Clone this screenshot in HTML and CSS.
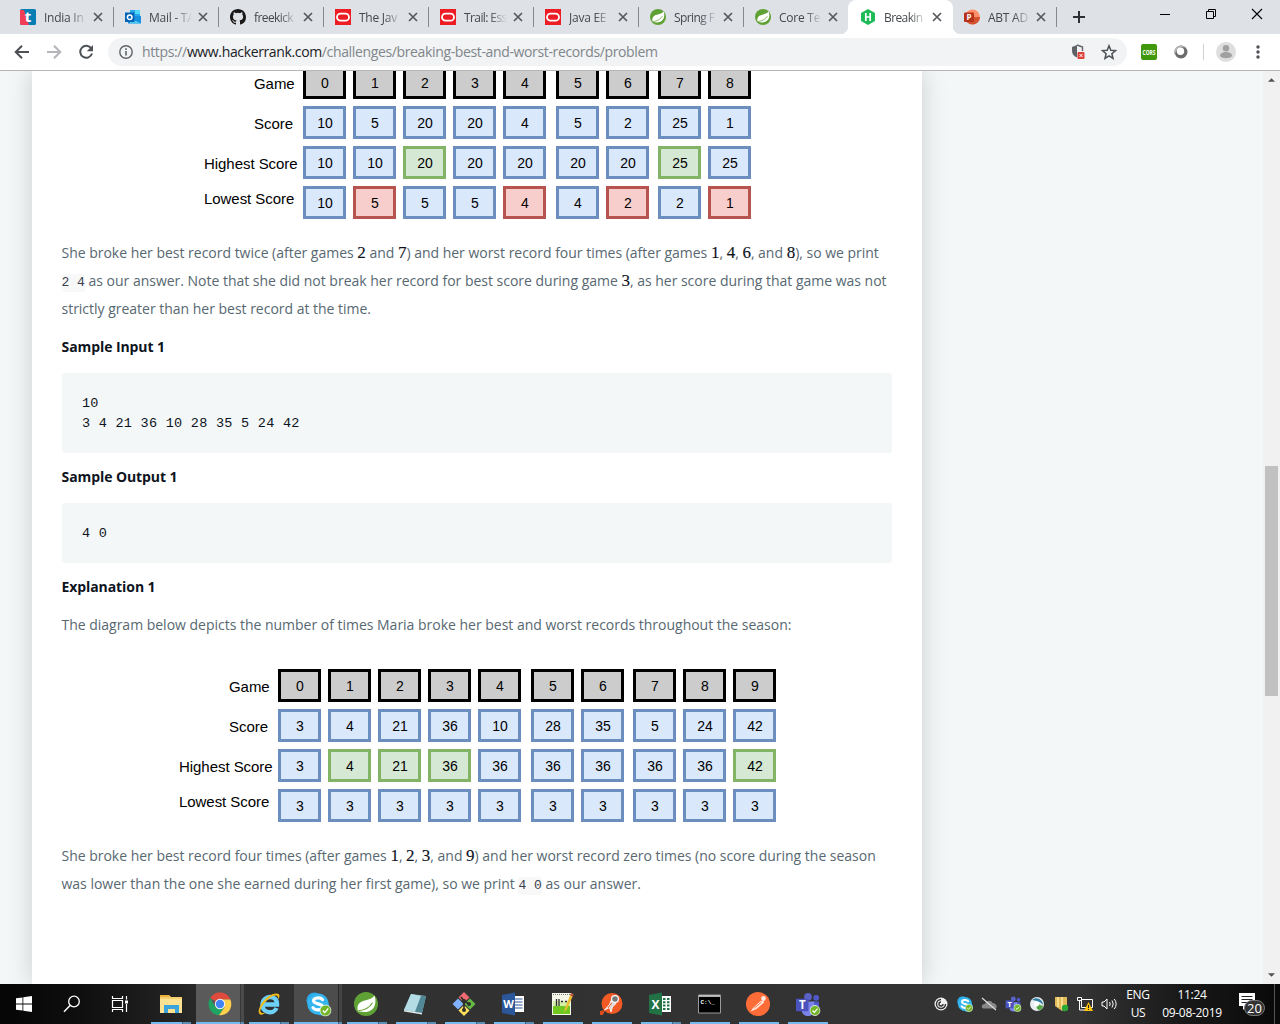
FILE: index.html
```html
<!DOCTYPE html>
<html lang="en">
<head>
<meta charset="utf-8">
<title>Breaking the Records | HackerRank</title>
<link rel="stylesheet" href="styles.css">
</head>
<body>
<svg class="defs" aria-hidden="true">
  <symbol id="close" viewBox="0 0 10 10"><path d="M1 1l8 8M9 1L1 9" stroke="#55595d" stroke-width="1.7"/></symbol>
  <symbol id="oracle" viewBox="0 0 16 16"><path fill="#ee1c25" d="M0 0h16v16H0z"/><rect x="2" y="4.7" width="12" height="7" rx="3.5" fill="none" stroke="#fff" stroke-width="1.8"/></symbol>
  <symbol id="spring" viewBox="0 0 24 24"><circle cx="12" cy="12" r="12" fill="#5fa134"/><path d="M20.500 3.500c1.800 5.500 1.200 11-2.700 14.200-3.500 3-8.500 2.800-13.600 1.600C3 17 3.200 13.500 5 11.500c3.800-4.200 12-2.500 15.500-8z" fill="#fff"/><path d="M4.500 18.800c6-.6 11-3 14-8" fill="none" stroke="#5fa134" stroke-width="1.100"/></symbol>
  <symbol id="ok" viewBox="0 0 12 12"><circle cx="6" cy="6" r="5.500" fill="#72b527" stroke="#fff" stroke-width=".8"/><path d="M3.300 6l2 2 3.500-4" fill="none" stroke="#fff" stroke-width="1.300"/></symbol>
  <symbol id="skype" viewBox="0 0 26 26"><circle cx="9" cy="9" r="8.500" fill="#2aa9e6"/><circle cx="17" cy="17" r="8.500" fill="#2aa9e6"/><circle cx="13" cy="13" r="11.500" fill="#35b5ef"/><path d="M18 8.300C15.500 5.400 8 5.900 8.200 9.700c.2 4 9.800 2.300 9.800 6.400 0 4.200-8 4.300-10.500.9" fill="none" stroke="#fff" stroke-width="3.400" stroke-linecap="round"/></symbol>
  <symbol id="teams" viewBox="0 0 26 26"><circle cx="13.500" cy="5" r="4" fill="#5b62c8"/><circle cx="22" cy="6" r="3" fill="#5059c9"/><path d="M17 10h8v8c0 3-4 5-8 3z" fill="#5059c9"/><path d="M7 10h13v9c0 8-13 8-13 0z" fill="#7b83eb"/><path d="M1 7h13v13H1z" fill="#4b53bc"/><text x="7.500" y="17.500" class="glyph" font-size="12">T</text></symbol>
</svg>

<header class="tabstrip">
  <div class="tab"><svg class="fav" viewBox="0 0 16 16"><rect width="16" height="16" rx="1.500" fill="#087eb4"/><path d="M0 1h4l5 15H1L0 15z" fill="#ef3e56"/><text x="8" y="13" class="glyph" font-size="15">t</text></svg><span class="title">India In</span><svg class="x"><use href="#close"/></svg></div>
  <div class="tab"><svg class="fav" viewBox="0 0 16 16"><path d="M5 1h10v7H5z" fill="#28a8ea"/><path d="M10 1h5v4h-5z" fill="#50d9ff"/><path d="M3 7h13v7.500H3z" fill="#1490df"/><path d="M5 9l11 5.500H5z" fill="#50c9f5"/><path d="M0 3.500h9.500v9.500H0z" fill="#0364b8"/><circle cx="4.700" cy="8.200" r="2.300" fill="none" stroke="#fff" stroke-width="1.500"/></svg><span class="title">Mail - T<span class="tight">A</span></span><svg class="x"><use href="#close"/></svg></div>
  <div class="tab"><svg class="fav" viewBox="0 0 16 16"><path fill="#191717" d="M8 0C3.580 0 0 3.580 0 8c0 3.540 2.290 6.530 5.470 7.590.4.070.55-.17.55-.38v-1.490c-2.230.48-2.690-.94-2.690-.94-.36-.91-.89-1.170-.89-1.170-.72-.51.070-.49.070-.49.8.070 1.220.83 1.220.83.72 1.230 1.870.87 2.330.66.070-.52.28-.87.51-1.070-1.780-.2-3.640-.89-3.640-3.950 0-.87.31-1.590.82-2.150-.080-.2-.36-1.020.080-2.120 0 0 .67-.21 2.200.82a7.600 7.600 0 0 1 4 0c1.530-1.030 2.200-.82 2.200-.82.44 1.100.16 1.920.080 2.120.51.560.82 1.270.82 2.150 0 3.070-1.870 3.750-3.650 3.950.29.25.54.73.54 1.480v2.190c0 .21.15.46.55.38A8 8 0 0 0 16 8c0-4.420-3.580-8-8-8z"/></svg><span class="title snug">freekick</span><svg class="x"><use href="#close"/></svg></div>
  <div class="tab"><svg class="fav"><use href="#oracle"/></svg><span class="title">The Jav</span><svg class="x"><use href="#close"/></svg></div>
  <div class="tab"><svg class="fav"><use href="#oracle"/></svg><span class="title snug">Trail: Ess</span><svg class="x"><use href="#close"/></svg></div>
  <div class="tab"><svg class="fav"><use href="#oracle"/></svg><span class="title">Java EE</span><svg class="x"><use href="#close"/></svg></div>
  <div class="tab"><svg class="fav"><use href="#spring"/></svg><span class="title snug">Spring F</span><svg class="x"><use href="#close"/></svg></div>
  <div class="tab before-active"><svg class="fav"><use href="#spring"/></svg><span class="title">Core Te</span><svg class="x"><use href="#close"/></svg></div>
  <div class="tab active"><svg class="fav" viewBox="0 0 16 16"><path d="M8 0l7 4v8l-7 4-7-4V4z" fill="#1fba58"/><path d="M5.800 4v8M10.200 4v8M5.800 8h4.400" stroke="#fff" stroke-width="1.700"/></svg><span class="title snug">Breakin</span><svg class="x"><use href="#close"/></svg></div>
  <div class="tab last"><svg class="fav" viewBox="0 0 16 16"><circle cx="8.500" cy="8" r="7.500" fill="#ff8f6b"/><path d="M1 8h15a7.500 7.500 0 0 1-15 0z" fill="#d35230"/><rect y="3.500" width="10" height="9.500" rx="1" fill="#b7321a"/><text x="5" y="11.300" class="glyph" font-size="8">P</text></svg><span class="title">ABT AD</span><svg class="x"><use href="#close"/></svg></div>
  <svg class="newtab" viewBox="0 0 12 12"><path d="M6 0v12M0 6h12" stroke="#2d3033" stroke-width="2"/></svg>
  <div class="winbtns">
    <svg viewBox="0 0 12 12"><path d="M1 6.500h10" stroke="#000"/></svg>
    <svg viewBox="0 0 12 12"><path d="M1.500 3.500h7v7h-7zM3.500 3V1.500h7v7H9" fill="none" stroke="#000"/></svg>
    <svg viewBox="0 0 12 12"><path d="M1 1l10 10M11 1L1 11" stroke="#000" stroke-width="1.100"/></svg>
  </div>
</header>

<nav class="toolbar">
  <svg class="nav" viewBox="0 0 16 16"><path d="M15 8H2M8 1.700L1.700 8 8 14.300" fill="none" stroke="#4d5156" stroke-width="2"/></svg>
  <svg class="nav" viewBox="0 0 16 16"><path d="M1 8h13M8 1.700L14.300 8 8 14.300" fill="none" stroke="#b4b6b9" stroke-width="2"/></svg>
  <svg class="nav" viewBox="0 0 16 16"><path d="M13.300 4.500A6 6 0 1 0 14 9.500" fill="none" stroke="#4d5156" stroke-width="2"/><path d="M15 1v6.200H8.800z" fill="#4d5156"/></svg>
  <div class="omnibox">
    <svg class="info" viewBox="0 0 14 14"><circle cx="7" cy="7" r="6.200" fill="none" stroke="#5f6368" stroke-width="1.400"/><path d="M7 6v4.500M7 3.300v1.600" stroke="#5f6368" stroke-width="1.600"/></svg>
    <span class="url">https://<b>www.hackerrank.com</b>/challenges/breaking-best-and-worst-records/problem</span>
    <svg class="shield" viewBox="0 0 14 16"><path d="M6 1L1 3v4c0 3 2 5.500 5 6.500z" fill="#5f6368"/><path d="M6 1l5.500 2v4" fill="none" stroke="#5f6368" stroke-width="1.400"/><rect x="6.500" y="8" width="7" height="7" rx="1" fill="#dd4338"/><path d="M8.500 10l3 3m0-3l-3 3" stroke="#fff"/></svg>
    <svg class="star" viewBox="0 0 16 16"><path d="M8 1.800l1.800 4.400 4.700.4-3.600 3.100 1.100 4.600L8 11.800l-4 2.500 1.100-4.600-3.600-3.100 4.700-.4z" fill="none" stroke="#4d5156" stroke-width="1.500"/></svg>
  </div>
  <svg class="ext" viewBox="0 0 16 16"><rect width="16" height="16" rx="2" fill="#42980b"/><text x="8" y="10.500" class="glyph" font-size="7" textLength="13" lengthAdjust="spacingAndGlyphs">CORS</text></svg>
  <svg class="ext orb" viewBox="0 0 16 16"><circle cx="8" cy="8" r="6.500" fill="#6c6c6c"/><path d="M8 1.500A6.500 6.500 0 0 0 2 11 8 8 0 0 1 13.500 4 6.500 6.500 0 0 0 8 1.500z" fill="#b5b5b5"/><circle cx="7.500" cy="7.200" r="3.700" fill="#fff"/></svg>
  <i class="rule"></i>
  <svg class="avatar" viewBox="0 0 20 20"><circle cx="10" cy="10" r="10" fill="#dedede"/><circle cx="10" cy="6.300" r="3.200" fill="#a0a0a0"/><path d="M4 14c0-5.300 12-5.300 12 0-2 3-10 3-12 0z" fill="#a0a0a0"/></svg>
  <svg class="menu" viewBox="0 0 4 14"><g fill="#4d5156"><circle cx="2" cy="2" r="1.700"/><circle cx="2" cy="7" r="1.700"/><circle cx="2" cy="12" r="1.700"/></g></svg>
</nav>

<div class="viewport">
  <div class="canvas">
    <main class="card">
      <div class="diagram first" data-games="0 1 2 3 4 5 6 7 8" data-score="10 5 20 20 4 5 2 25 1" data-high="10 10 20* 20 20 20 20 25* 25" data-low="10 5* 5 5 4* 4 2* 2 1*"></div>
      <p>She broke her best record twice (after games <span class="m">2</span> and <span class="m">7</span>) and her worst record four times (after games <span class="m">1</span>, <span class="m">4</span>, <span class="m">6</span>, and <span class="m">8</span>), so we print<br><code>2 4</code> as our answer. Note that she did not break her record for best score during game <span class="m">3</span>, as her score during that game was not<br>strictly greater than her best record at the time.</p>
      <h3>Sample Input 1</h3>
      <pre>10
3 4 21 36 10 28 35 5 24 42</pre>
      <h3>Sample Output 1</h3>
      <pre>4 0</pre>
      <h3>Explanation 1</h3>
      <p class="intro">The diagram below depicts the number of times Maria broke her best and worst records throughout the season:</p>
      <div class="diagram second" data-games="0 1 2 3 4 5 6 7 8 9" data-score="3 4 21 36 10 28 35 5 24 42" data-high="3 4* 21* 36* 36 36 36 36 36 42*" data-low="3 3 3 3 3 3 3 3 3 3"></div>
      <p>She broke her best record four times (after games <span class="m">1</span>, <span class="m">2</span>, <span class="m">3</span>, and <span class="m">9</span>) and her worst record zero times (no score during the season<br>was lower than the one she earned during her first game), so we print <code>4 0</code> as our answer.</p>
    </main>
  </div>
  <aside class="scrollbar">
    <svg viewBox="0 0 8 4"><path d="M0 4l4-4 4 4z"/></svg>
    <div class="track"><div class="thumb"></div></div>
    <svg viewBox="0 0 8 4"><path d="M0 0l4 4 4-4z"/></svg>
  </aside>
</div>

<footer class="taskbar">
  <div class="sys"><svg width="16" height="16" viewBox="0 0 16 16"><path d="M0 2.300L6.500 1.400v6.200H0zM7.300 1.300L16 0v7.600H7.300zM0 8.400h6.500v6.200L0 13.700zM7.300 8.400H16V16l-8.700-1.300z" fill="#fff"/></svg></div>
  <div class="sys"><svg width="18" height="18" viewBox="0 0 18 18"><circle cx="11" cy="6.500" r="5.300" fill="none" stroke="#fff" stroke-width="1.300"/><path d="M7.300 10.300L1 16.800" stroke="#fff" stroke-width="1.500"/></svg></div>
  <div class="sys"><svg width="16" height="16" viewBox="0 0 16 16"><path d="M.5 0v2.500h10V0M.5 16v-2.500h10V16M.5 4.500h10v7H.5zM14.500 0v3.500M14.500 8v8" fill="none" stroke="#fff" stroke-width="1.200"/><path d="M13 4.500h3v3h-3z" fill="#fff"/></svg></div>
  <div class="apps">
    <div class="app multi"><svg viewBox="0 0 24 24"><path d="M1 4V3h9l2 2h11v16H1z" fill="#f5cf6b"/><path d="M1 7h22v14H1z" fill="#fde293"/><path d="M5 21v-8h15v8h-4v-4H9v4z" fill="#3ba4dc"/><path d="M1 3h9v2H1z" fill="#eab03d"/></svg></div>
    <div class="app on multi"><svg viewBox="0 0 24 24"><path d="M12 12L2.200 6.100A11.300 11.300 0 0 1 22.400 7.500H12z" fill="#de4b3c"/><path d="M12 12l-5 2.500L2.200 6.100A11.300 11.300 0 0 0 11 23.300l5.500-8z" fill="#1fa462"/><path d="M12 7.500h10.400A11.300 11.300 0 0 1 11 23.300l5.500-8z" fill="#fdd14c"/><circle cx="12" cy="12" r="5.200" fill="#f4f4f4"/><circle cx="12" cy="12" r="4.200" fill="#4284f3"/></svg></div>
    <div class="app multi"><svg viewBox="0 0 24 24"><path d="M7.500 12.500H20c.4-10.500-14.500-9.800-14.500.5 0 8.500 11.500 9.500 14 3" fill="none" stroke="#6cd0f7" stroke-width="4.400"/><path d="M2.500 22C-1 17 9 2 19 1.500c4.500-.3 4 3.500 2 6C22 2 17 2 11 7.500 5 13 1 20 5 21c2 .5 4-1 5-1.500-3 2.800-6 4-7.500 2.500z" fill="#f1bc1b"/></svg></div>
    <div class="app on multi skype"><svg viewBox="0 0 24 24"><use href="#skype" width="24" height="24"/><use href="#ok" x="13.500" y="12.500" width="12" height="12"/></svg></div>
    <div class="app multi"><svg viewBox="0 0 24 24"><use href="#spring"/></svg></div>
    <div class="app multi"><svg viewBox="0 0 24 24"><path d="M8 2l15 2-4 17-18-3z" fill="#8abfcf"/><path d="M8 2l10 2-6 16-11-2z" fill="#b4dce5"/><path d="M18 4l5 0-4 17-7-1z" fill="#528795"/><path d="M1 18l18 3v1.500L1 19.500z" fill="#e1e8e8"/></svg></div>
    <div class="app multi"><svg viewBox="0 0 24 24"><path d="M12 0l5.500 5.500-5.500 5-5.500-5z" fill="#ee6b72"/><path d="M6 6.500l5.500 5.500L6 17.500.5 12z" fill="#80b3ff"/><path d="M18 6.500l5.500 5.500-5.500 5.500-5.500-5.500z" fill="#66bb45"/><path d="M12 13l5.500 5.500L12 24l-5.500-5.500z" fill="#ffe15d"/><path d="M9 5l3 4v9M12 9l5 3" fill="none" stroke="#302d2d" stroke-width="1.700"/><g fill="#302d2d"><circle cx="12" cy="9" r="2"/><circle cx="17" cy="12" r="2"/><circle cx="12" cy="18" r="2"/></g></svg></div>
    <div class="app multi"><svg viewBox="0 0 24 24"><path d="M12 4h11v16H12z" fill="#fff"/><path d="M14 7h7.500M14 10h7.500M14 13h7.500M14 16h7.500" stroke="#2b579a" stroke-width="1.200"/><path d="M1 3l13-2.500v23L1 21z" fill="#2b579a"/><text x="7.500" y="16" class="glyph" font-size="11">W</text></svg></div>
    <div class="app"><svg viewBox="0 0 24 24"><path d="M2 1h19v22H2z" fill="#f5f7e8"/><path d="M3 14h17v8H3z" fill="#70c820"/><path d="M3 9h17v5H3z" fill="#d6efa6"/><path d="M3 2.500h17" stroke="#777" stroke-dasharray="1 1"/><path d="M6.500 7v7M9 7v7M11 9.500h2M15 9.500h2" stroke="#333" stroke-width="1.300"/><path d="M21 1l2.500 1.500L17 17l-3 3 1-4z" fill="#edbd32"/><path d="M21 1l2.500 1.500-1 2.500L20 3z" fill="#ba504b"/></svg></div>
    <div class="app"><svg viewBox="0 0 24 24"><circle cx="13" cy="11.500" r="10.500" fill="#f15a24"/><path d="M1 19l5-1-2 5-3 0z" fill="#d94b1c"/><path d="M12 8.500l5 3-3.500 3.500-1.500 5-1.500-4.500L5.500 18l5-5.500z" fill="#ddd" stroke="#fff" stroke-width=".8"/><path d="M13 10.500L9 16" stroke="#f15a24"/><circle cx="16" cy="7" r="3.400" fill="#777" stroke="#fff" stroke-width="1.200"/></svg></div>
    <div class="app multi"><svg viewBox="0 0 24 24"><path d="M12 4h11v16H12z" fill="#fff"/><path d="M15 7h2.500M19 7h2.500M15 10.300h2.500M19 10.300h2.500M15 13.600h2.500M19 13.600h2.500M15 17h2.500M19 17h2.500" stroke="#217346" stroke-width="2"/><path d="M1 3l13-2.500v23L1 21z" fill="#217346"/><text x="7.500" y="16.500" class="glyph" font-size="12">X</text></svg></div>
    <div class="app"><svg viewBox="0 0 24 24"><path d="M1.500 3h22v18h-22z" fill="#000" stroke="#9a9a9a"/><path d="M2 4h21" stroke="#ddd" stroke-width="1.600"/><text x="3.500" y="11.500" class="prompt">C:\_</text></svg></div>
    <div class="app"><svg viewBox="0 0 24 24"><circle cx="12" cy="12" r="12" fill="#ff6c37"/><path d="M4.500 19.500l3-4L14.500 9l3-.5.5 2-7.500 6.500z" fill="#ffe9e0"/><circle cx="17.500" cy="6.500" r="2.400" fill="#ffe9e0"/><path d="M8.500 16l7-6" stroke="#ff6c37"/></svg></div>
    <div class="app"><svg viewBox="0 0 24 24"><use href="#teams" width="25" height="25"/><use href="#ok" x="14.500" y="13" width="11" height="11"/></svg></div>
  </div>
  <div class="tray">
    <svg viewBox="0 0 16 16"><circle cx="8" cy="8" r="6.500" fill="#eee"/><path d="M8 3.500a4.500 4.500 0 1 0 4.500 4.500M8 6a2 2 0 1 0 2 2" fill="none" stroke="#333" stroke-width="1.400"/></svg>
    <svg viewBox="0 0 16 16"><use href="#skype" width="16" height="16"/><use href="#ok" x="8" y="8" width="8" height="8"/></svg>
    <svg viewBox="0 0 16 16"><path d="M2 12.500c-3-2 0-5 2-4.500 1-4 6.500-4 7.500-1 3-.5 6 4 3 5.500z" fill="#888"/><path d="M1 2l14 12" stroke="#ddd" stroke-width="1.200"/></svg>
    <svg viewBox="0 0 16 16"><use href="#teams" width="16" height="16"/><use href="#ok" x="8.500" y="8" width="8" height="8"/></svg>
    <svg viewBox="0 0 16 16"><circle cx="8" cy="8" r="7" fill="#e9eef0"/><path d="M3 4c5-4 11 0 11 5-3-4-6-4-11-5z" fill="#307fa8"/><path d="M10 14c-3-1-3-4-1-6l5 2c0 2-2 4-4 4z" fill="#52a547"/><circle cx="7.500" cy="8" r="2.500" fill="#fff"/></svg>
    <svg viewBox="0 0 16 16"><path d="M2 1h12v10l-5 4-7-5z" fill="#e2b957"/><path d="M5 1v10M9 1v12" stroke="#fff0ad" stroke-width="1.300"/><circle cx="12" cy="12" r="3.200" fill="#29aa35"/></svg>
    <svg viewBox="0 0 16 16"><path d="M4.500 3.500h11v8h-11zM.5 1.500h4v3h-4zM2.500 5v9H8" fill="none" stroke="#fff"/><path d="M11.500 6l4.500 9H7z" fill="#ffc20e"/><path d="M11.500 9v3M11.500 13v1" stroke="#222"/></svg>
    <svg viewBox="0 0 16 16"><path d="M1 6h2l3-3v10L3 10H1z" fill="none" stroke="#fff"/><path d="M8.500 6q1.500 2 0 4M11 4.500q2.500 3.500 0 7M13.300 3q3.700 5 0 10" fill="none" stroke="#fff"/></svg>
  </div>
  <div class="stack lang"><span>ENG</span><span>US</span></div>
  <div class="stack clock"><span>11:24</span><span>09-08-2019</span></div>
  <svg class="notes" viewBox="0 0 28 26"><path d="M1 2h16v13h-8l-4 4v-4H1z" fill="#fff"/><path d="M3.500 5.500h11M3.500 8.500h11M3.500 11.500h6" stroke="#222"/><rect x="6.500" y="9.500" width="20" height="15" rx="7.500" fill="#333" stroke="#777"/><text x="16.500" y="21.500" class="count">20</text></svg>
  <i class="desk"></i>
</footer>
<script src="script.js"></script>
</body>
</html>
```
FILE: styles.css
```css
* { box-sizing: border-box; }
body {
  margin: 0; width: 1280px; height: 1024px; overflow: hidden;
  display: flex; flex-direction: column;
  font-family: "Open Sans", "Noto Sans", sans-serif; background: #fff;
}
svg { display: block; flex: none; overflow: visible; }
.defs { position: absolute; width: 0; height: 0; }
.glyph { fill: #fff; font-family: "Open Sans", sans-serif; font-weight: 700; text-anchor: middle; }

/* tab strip */
.tabstrip { flex: none; height: 34px; background: #dee1e6; display: flex; align-items: center; padding-left: 9px; }
.tab { width: 105px; height: 34px; padding-left: 11px; display: flex; align-items: center; background: linear-gradient(#85888c, #85888c) right center / 1px 20px no-repeat; }
.tab.before-active { width: 104px; background: #dee1e6; }
.tab.active { position: relative; background: #fff; border-radius: 8px 8px 0 0; width: 105px; padding-left: 12px; }
.tab.active .x { margin-left: 5px; }
.tab.active::before, .tab.active::after { content: ""; position: absolute; bottom: 0; width: 8px; height: 8px; }
.tab.active::before { left: -8px; background: radial-gradient(circle at 0 0, transparent 8px, #fff 8.500px); }
.tab.active::after { right: -8px; background: radial-gradient(circle at 100% 0, transparent 8px, #fff 8.500px); }
.tab.last { width: 104px; }
.tab.last .x { margin-left: 5px; }
.fav { width: 16px; height: 16px; margin-right: 8px; }
.title { width: 43px; white-space: nowrap; font-size: 12px; letter-spacing: -.25px; color: #45494d; -webkit-mask-image: linear-gradient(90deg, #000 60%, transparent); mask-image: linear-gradient(90deg, #000 60%, transparent); }
.title.snug { letter-spacing: -.6px; }
.tight { letter-spacing: -2px; }
.x { width: 10px; height: 10px; margin-left: 6px; }
.newtab { width: 12px; height: 12px; margin-left: 16px; }
.winbtns { margin: -6px 17px 0 auto; display: flex; gap: 34px; }
.winbtns svg { width: 12px; height: 12px; }

/* toolbar */
.toolbar { flex: none; height: 37px; border-bottom: 1px solid #b6b4b6; display: flex; align-items: center; padding-left: 14px; background: #fff; }
.nav { width: 16px; height: 16px; margin-right: 16px; }
.omnibox { width: 1019px; height: 28px; margin-left: -2px; border-radius: 14px; background: #f1f3f4; display: flex; align-items: center; padding-left: 11px; }
.info { width: 14px; height: 14px; margin-right: 9px; }
.url { font-size: 14px; letter-spacing: -.36px; color: #80868b; white-space: nowrap; margin-top: -1px; }
.url b { font-weight: 400; color: #202124; }
.shield { width: 14px; height: 16px; margin-left: auto; }
.star { width: 16px; height: 16px; margin: 0 10px 0 16px; }
.ext { width: 16px; height: 16px; margin-left: 14px; }
.orb { margin-left: 16px; }
.rule { width: 1px; height: 16px; background: #cfd1d4; margin: 0 12px 0 14px; }
.avatar { width: 20px; height: 20px; }
.menu { width: 4px; height: 14px; margin-left: 20px; }

/* page */
.viewport { flex: none; height: 913px; display: flex; overflow: hidden; }
.canvas { width: 1263px; padding-left: 32px; background: #f3f7f7; overflow: hidden; }
.card { width: 890px; height: 913px; padding: 0 30px; background: #fff; box-shadow: 0 0 24px rgba(0, 0, 0, .17); color: #576871; font-size: 14px; display: flex; flex-direction: column; }
.card p { margin: 0 0 0 -.5px; line-height: 28px; white-space: nowrap; letter-spacing: -.014px; }
.card h3 { margin: 10px 0 12px -.5px; font-size: 14px; line-height: 28px; font-weight: 700; letter-spacing: -.08px; color: #0e141e; }
.card pre { margin: 0; padding: 21px 20px 19px; border-radius: 3px; background: #f3f7f7; font: 13.500px/20px "Liberation Mono", monospace; letter-spacing: .27px; color: #0e141e; }
.card code { font: 13px/18px "Liberation Mono", monospace; letter-spacing: 0; background: #f8f8f8; border-radius: 3px; color: #39424e; display: inline-block; }
.card p.intro { margin-top: -2px; }
.m { font: 17px/20px "Liberation Serif", serif; color: #0e141e; -webkit-text-stroke: .15px #0e141e; }

/* score diagrams */
.diagram { flex: none; display: grid; row-gap: 7px; font-family: "Liberation Sans", sans-serif; color: #000; }
.diagram.first { margin: -5px 0 20px 142px; }
.diagram.second { margin: 30px 0 20px 117px; }
.line { display: flex; height: 33px; align-items: center; }
.label { width: 99px; font-size: 15px; padding-top: 1px; white-space: nowrap; letter-spacing: -.05px; }
.label.short { padding-left: 50px; }
.label.raised { padding: 0 0 9px; }
.cell { width: 43px; height: 33px; margin-right: 7px; padding-left: 1px; border: 3px solid #6c8ebf; background: #dae8fc; font-size: 14px; line-height: 29px; text-align: center; }
.cell:nth-child(6) { margin-right: 10px; }
.cell:nth-child(8) { margin-right: 9px; }
.cell.game { border-color: #000; background: #ccc; }
.cell.best { border-color: #82b366; background: #d5e8d4; }
.cell.worst { border-color: #b85450; background: #f8cecc; }

/* scrollbar */
.scrollbar { width: 17px; background: #f1f1f1; display: flex; flex-direction: column; align-items: center; padding: 7px 0; }
.scrollbar svg { width: 7px; height: 4px; fill: #505050; margin-right: 1px; }
.track { flex: 1; padding-top: 384px; }
.thumb { width: 13px; height: 230px; background: #c1c1c1; }

/* taskbar */
.taskbar { flex: none; height: 40px; background: linear-gradient(90deg, #050505, #101010 90px, #303030 230px, #343434 1080px, #191919 1180px, #090909); display: flex; align-items: center; color: #fff; }
.sys { width: 48px; display: flex; justify-content: center; }
.apps { display: flex; margin-left: 3px; }
.app { position: relative; width: 49px; height: 40px; padding: 8px 0 0 12px; }
.app svg { width: 24px; height: 24px; }
.app:nth-child(n+5) svg { margin-left: -1px; }
.app::after { content: ""; position: absolute; left: 4px; bottom: 0; width: 40px; height: 2px; background: #76b9ed; }
.app.multi::after { background: linear-gradient(90deg, #76b9ed 31px, #416683 31px, #416683 32px, #5a8fb8 32px); }
.app.on { background: linear-gradient(90deg, #5a5a5a 44px, #383838 44px, #383838 45px, #4b4b4b 45px, #4b4b4b 48px, transparent 48px); }
.app.on.skype { background: linear-gradient(90deg, #4c4c4c 44px, #292929 44px, #292929 45px, #444 45px, #444 48px, transparent 48px); }
.app.on::after { left: 0; width: 48px; background: linear-gradient(90deg, #76b9ed 44px, #416683 44px, #416683 45px, #5a8fb8 45px); }
.prompt { fill: #fff; font: 700 6px "Liberation Mono", monospace; }
.tray { margin-left: 100px; display: flex; gap: 8px; }
.tray svg { width: 16px; height: 16px; }
.stack { display: flex; flex-direction: column; align-items: center; font-size: 12px; line-height: 18px; letter-spacing: -.3px; height: 36px; white-space: nowrap; margin-top: -1px; }
.lang { width: 42px; }
.clock { width: 66px; }
.notes { width: 28px; height: 26px; margin-left: 13px; }
.count { fill: #fff; font: 13px "Open Sans", sans-serif; text-anchor: middle; }
.desk { width: 1px; height: 40px; background: #555; margin-left: 8px; }
```
FILE: script.js
```javascript
// Builds each score table from its data attributes; "*" marks a broken record.
const rows = [
  ["Game", "games", "short", "game", ""],
  ["Score", "score", "short", "", ""],
  ["Highest Score", "high", "", "", "best"],
  ["Lowest Score", "low", "raised", "", "worst"]
];

document.querySelectorAll(".diagram").forEach(diagram => {
  rows.forEach(([name, key, labelClass, cellClass, marked]) => {
    const line = document.createElement("div");
    line.className = "line";
    const label = document.createElement("span");
    label.className = "label " + labelClass;
    label.textContent = name;
    line.append(label);
    diagram.dataset[key].split(" ").forEach(value => {
      const cell = document.createElement("span");
      cell.className = "cell " + (value.endsWith("*") ? marked : cellClass);
      cell.textContent = value.replace("*", "");
      line.append(cell);
    });
    diagram.append(line);
  });
});
```
